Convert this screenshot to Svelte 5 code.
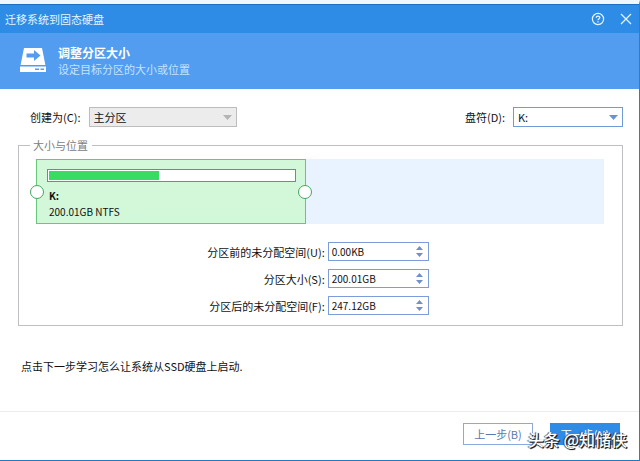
<script>
  let kind = $state('primary');
  let letter = $state('K:');
  const fields = $state([
    { id: 'before', label: '分区前的未分配空间(U):', value: '0.00KB' },
    { id: 'size', label: '分区大小(S):', value: '200.01GB' },
    { id: 'after', label: '分区后的未分配空间(F):', value: '247.12GB' }
  ]);
  const total = 447.13;
  const size = 200.01;
  const used = 45;
  const share = $derived(Math.round((size / total) * 100) + 2.5);

  function step(field, delta) {
    const unit = field.value.slice(-2);
    const next = Math.max(0, parseFloat(field.value) + delta);
    field.value = next.toFixed(2) + unit;
  }
</script>

<div class="window">
  <header>
    <div class="titlebar">
      <h1>迁移系统到固态硬盘</h1>
      <div class="controls">
        <button type="button" aria-label="帮助">
          <svg width="14" height="14" viewBox="0 0 14 14" fill="none" stroke="currentColor">
            <circle cx="7" cy="7" r="5.6" stroke-width="1.2" />
            <path d="M5.2 5.7C5.2 3.5 8.8 3.5 8.8 5.6C8.8 6.8 7 6.7 7 8.2M7 9.2V10.4" stroke-width="1.3" />
          </svg>
        </button>
        <button type="button" aria-label="关闭">
          <svg width="14" height="14" viewBox="0 0 14 14" fill="none" stroke="currentColor" stroke-width="1.2">
            <path d="M2 2L12 12M12 2L2 12" />
          </svg>
        </button>
      </div>
    </div>
    <div class="banner">
      <svg width="26" height="26" viewBox="0 0 26 26">
        <path d="M4 1H22L25.4 18H.6Z" fill="#fff" />
        <path d="M6.5 6.5H14V3L20.5 8.5L14 14V10.5H6.5Z" fill="#529def" />
        <path d="M0 19.5H26V25H0Z" fill="#fff" />
        <path d="M15 21.5H19V23H15ZM20.5 21.5H24V23H20.5Z" fill="#529def" />
      </svg>
      <div>
        <h2>调整分区大小</h2>
        <p>设定目标分区的大小或位置</p>
      </div>
    </div>
  </header>

  <main>
    <div class="options">
      <div class="option">
        <label for="kind">创建为(C):</label>
        <span class="drop off">
          <select id="kind" bind:value={kind} disabled>
            <option value="primary">主分区</option>
          </select>
          <svg width="9" height="5" viewBox="0 0 9 5"><path d="M0 0H9L4.5 5Z" fill="currentColor" /></svg>
        </span>
      </div>
      <div class="option">
        <label for="letter">盘符(D):</label>
        <span class="drop">
          <select id="letter" bind:value={letter}>
            <option>K:</option>
          </select>
          <svg width="9" height="5" viewBox="0 0 9 5"><path d="M0 0H9L4.5 5Z" fill="currentColor" /></svg>
        </span>
      </div>
    </div>

    <fieldset>
      <legend>大小与位置</legend>
      <div class="disk">
        <div class="partition" style="width: {share}%">
          <div class="usage"><div class="used" style="width: {used}%"></div></div>
          <strong>K:</strong>
          <span>200.01GB NTFS</span>
          <button type="button" class="grip start" aria-label="起始位置"></button>
          <button type="button" class="grip end" aria-label="结束位置"></button>
        </div>
      </div>
      <div class="fields">
        {#each fields as field (field.id)}
          <label for={field.id}>{field.label}</label>
          <div class="spin">
            <input id={field.id} type="text" bind:value={field.value} />
            <div class="steps">
              <button type="button" aria-label="增加" onclick={() => step(field, 1)}>
                <svg width="7" height="4" viewBox="0 0 7 4"><path d="M0 4L3.5 0L7 4Z" fill="currentColor" /></svg>
              </button>
              <button type="button" aria-label="减少" onclick={() => step(field, -1)}>
                <svg width="7" height="4" viewBox="0 0 7 4"><path d="M0 0H7L3.5 4Z" fill="currentColor" /></svg>
              </button>
            </div>
          </div>
        {/each}
      </div>
    </fieldset>

    <p class="hint">点击下一步学习怎么让系统从SSD硬盘上启动.</p>
  </main>

  <footer>
    <button type="button" class="action">上一步(B)</button>
    <button type="button" class="action next">下一步(N)</button>
    <span class="mark">头条 @知储侠</span>
  </footer>
</div>

<style>
  :global(body) {
    margin: 0;
    background: #fff;
  }
  .window {
    box-sizing: border-box;
    min-height: 100vh;
    display: flex;
    flex-direction: column;
    border-top: 4px solid #f0f6fb;
    border-right: 1px solid #2b7fc4;
    border-bottom: 1px solid #1c7bc8;
    background: #fff;
    color: #111;
    font: 11px/16px "Noto Sans CJK SC", sans-serif;
  }
  h1, h2, p {
    margin: 0;
    font-size: 11px;
    font-weight: 400;
  }
  button, select, input {
    font: inherit;
    color: inherit;
    margin: 0;
    padding: 0;
    border: 0;
    border-radius: 0;
    background: none;
  }
  svg {
    display: block;
    flex: none;
  }
  .titlebar {
    box-sizing: border-box;
    height: 29px;
    display: flex;
    align-items: center;
    justify-content: space-between;
    padding: 0 6px 0 5px;
    border-top: 1px solid #1b70c4;
    background: #2e8be6;
    color: #e4f6ff;
  }
  .controls {
    display: flex;
    gap: 14px;
  }
  .banner {
    height: 56px;
    display: flex;
    align-items: center;
    gap: 12px;
    padding-left: 20px;
    background: #529def;
    color: #c4e4ff;
  }
  .banner svg {
    margin-bottom: 2px;
  }
  .banner h2 {
    color: #fff;
    font-size: 12px;
    font-weight: 700;
  }
  main {
    flex: 1;
    padding: 18px 16px 16px 18px;
  }
  .options {
    display: flex;
    justify-content: space-between;
    padding-left: 12px;
  }
  .option {
    display: flex;
    align-items: center;
    gap: 8px;
  }
  .drop {
    box-sizing: border-box;
    width: 110px;
    height: 20px;
    display: flex;
    align-items: center;
    padding-right: 4px;
    border: 1px solid #6f9bd8;
    color: #6c92d2;
  }
  .drop select {
    flex: 1;
    min-width: 0;
    padding-left: 4px;
    appearance: none;
    color: #111;
    opacity: 1;
  }
  .drop.off {
    width: 148px;
    border-color: #bdbdbd;
    background: #ececec;
    color: #b4b4b4;
  }
  fieldset {
    min-width: 0;
    margin: 10px 0 0;
    padding: 6px 18px 10px 17px;
    border: 1px solid #bfbfc3;
  }
  legend {
    margin-left: -6px;
    padding: 0 4px 0 3px;
    color: #808080;
  }
  .disk {
    display: flex;
    background: #e9f3ff;
  }
  .partition {
    position: relative;
    box-sizing: border-box;
    height: 65px;
    display: flex;
    flex-direction: column;
    padding: 9px 9px 0 10px;
    border: 1px solid #69c77c;
    background: #d3f8d9;
    font-size: 10px;
  }
  .usage {
    height: 9px;
    margin-bottom: 6px;
    padding: 1px;
    border: 1px solid #46a862;
    background: #fff;
  }
  .used {
    height: 100%;
    background: #39dc62;
  }
  .partition strong,
  .partition span {
    padding-left: 2px;
  }
  .grip {
    position: absolute;
    top: 50%;
    box-sizing: border-box;
    width: 14px;
    height: 14px;
    border: 1px solid #43a65c;
    border-radius: 50%;
    background: #fff;
    transform: translate(-50%, -50%);
  }
  .start {
    left: 0;
  }
  .end {
    left: 100%;
  }
  .fields {
    display: grid;
    grid-template-columns: auto 101px;
    justify-content: center;
    align-items: center;
    justify-items: end;
    gap: 8px 3px;
    margin-top: 18px;
    padding-right: 4px;
  }
  .spin {
    box-sizing: border-box;
    width: 100%;
    height: 19px;
    display: flex;
    align-items: center;
    padding: 0 5px 0 3px;
    border: 1px solid #7f9cda;
    color: #718fc9;
  }
  .spin input {
    flex: 1;
    min-width: 0;
    height: 16px;
    color: #111;
    font-size: 10px;
  }
  .steps {
    display: flex;
    flex-direction: column;
    gap: 3px;
  }
  .hint {
    margin-top: 32px;
    padding-left: 3px;
  }
  footer {
    position: relative;
    display: flex;
    justify-content: flex-end;
    gap: 17px;
    padding: 11px 19px 15px;
    border-top: 1px solid #ececee;
  }
  .action {
    box-sizing: border-box;
    width: 70px;
    height: 22px;
    border: 1px solid #8ba9dc;
    color: #5878b0;
  }
  .next {
    border-color: #2e8be6;
    background: #2e8be6;
    color: #fff;
  }
  .mark {
    position: absolute;
    right: 12px;
    bottom: 11px;
    color: #fff;
    font-size: 16px;
    line-height: 20px;
    font-weight: 500;
    white-space: nowrap;
    text-shadow: 1px 1px 0 #222, 1px 1px 1px #222, -1px 0 1px #444;
  }
</style>
